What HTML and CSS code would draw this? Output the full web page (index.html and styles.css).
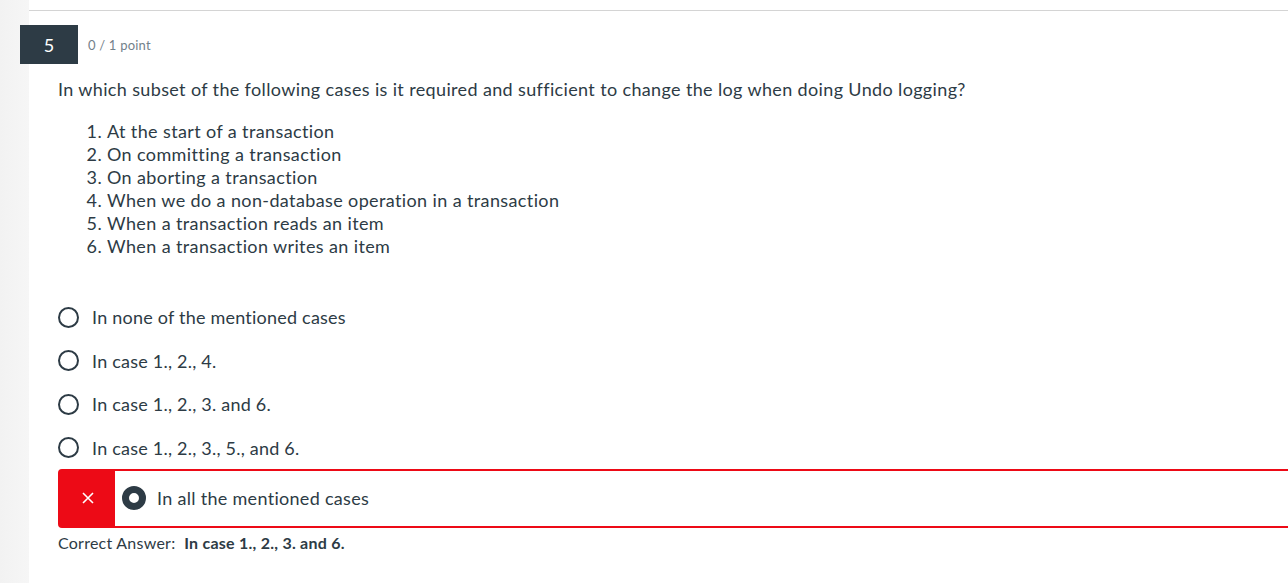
FILE: index.html
```html
<!DOCTYPE html>
<html>
<head>
<meta charset="utf-8">
<link rel="stylesheet" href="styles.css">
</head>
<body>
<div class="page">
  <div class="gutter"></div>
  <div class="main">
    <div class="question">
      <div class="q-header">
        <div class="badge">5</div>
        <div class="points">0 / 1 point</div>
      </div>
      <p class="q-text">In which subset of the following cases is it required and sufficient to change the log when doing Undo logging?</p>
      <ol class="cases">
        <li>At the start of a transaction</li>
        <li>On committing a transaction</li>
        <li>On aborting a transaction</li>
        <li>When we do a non-database operation in a transaction</li>
        <li>When a transaction reads an item</li>
        <li>When a transaction writes an item</li>
      </ol>
      <div class="options">
        <div class="option"><span class="radio"></span><span class="opt-label">In none of the mentioned cases</span></div>
        <div class="option"><span class="radio"></span><span class="opt-label">In case 1., 2., 4.</span></div>
        <div class="option"><span class="radio"></span><span class="opt-label">In case 1., 2., 3. and 6.</span></div>
        <div class="option"><span class="radio"></span><span class="opt-label">In case 1., 2., 3., 5., and 6.</span></div>
      </div>
      <div class="selected">
        <div class="wrong-mark">
          <svg width="12" height="12" viewBox="0 0 12 12"><path d="M1 1 L11 11 M11 1 L1 11" stroke="#fff" stroke-width="1.6" fill="none"/></svg>
        </div>
        <span class="radio checked"></span>
        <span class="opt-label sel-label">In all the mentioned cases</span>
      </div>
      <div class="correct">Correct Answer:&nbsp; <strong>In case 1., 2., 3. and 6.</strong></div>
    </div>
  </div>
</div>
</body>
</html>
```

FILE: styles.css
```css
html, body {
  margin: 0;
  padding: 0;
  background: #ffffff;
  overflow: hidden;
}
body {
  font-family: Lato, "Open Sans", sans-serif;
  color: #2d3b45;
}
.page {
  display: flex;
  min-height: 583px;
}
.gutter {
  width: 29px;
  flex: none;
  background: linear-gradient(to right, #f2f2f2, #f6f6f6);
}
.main {
  flex: 1;
  min-width: 0;
  padding-top: 10px;
}
.question {
  border-top: 1px solid #d4d4d4;
  padding-top: 14px;
}
.q-header {
  display: flex;
  align-items: center;
  margin-left: -9px;
}
.badge {
  width: 58px;
  height: 39px;
  background: #2d3b45;
  color: #ffffff;
  font-size: 18px;
  display: flex;
  align-items: center;
  justify-content: center;
}
.points {
  margin-left: 10px;
  font-size: 13px;
  letter-spacing: 0.2px;
  color: #73818b;
}
.q-text {
  margin: 14px 0 0 29px;
  font-size: 18px;
  letter-spacing: 0.36px;
  line-height: 23px;
}
.cases {
  margin: 19px 0 0 29px;
  padding-left: 49px;
  font-size: 18px;
  letter-spacing: 0.38px;
  line-height: 23px;
}
.options {
  display: flex;
  flex-direction: column;
  gap: 19.5px;
  margin: 47px 0 0 29px;
}
.option {
  display: flex;
  align-items: center;
  height: 24px;
}
.radio {
  width: 21px;
  height: 21px;
  box-sizing: border-box;
  border: 2.5px solid #2d3b45;
  border-radius: 50%;
  flex: none;
}
.opt-label {
  margin-left: 13px;
  font-size: 18px;
  letter-spacing: 0.22px;
}
.selected {
  display: flex;
  align-items: center;
  margin: 9px -20px 0 29px;
  height: 59px;
  box-sizing: border-box;
  border: 2px solid #ed0a16;
  border-radius: 4px;
}
.wrong-mark {
  width: 55px;
  align-self: stretch;
  background: #ed0a16;
  display: flex;
  align-items: center;
  justify-content: center;
}
.radio.checked {
  margin-left: 7px;
  width: 24px;
  height: 24px;
  border: 7px solid #2d3b45;
  background: #ffffff;
}
.sel-label {
  margin-left: 11px;
  letter-spacing: 0.3px;
}
.correct {
  margin: 5px 0 0 29px;
  font-size: 16px;
  letter-spacing: 0.25px;
  line-height: 20px;
}
.correct strong {
  font-weight: 700;
}
```
